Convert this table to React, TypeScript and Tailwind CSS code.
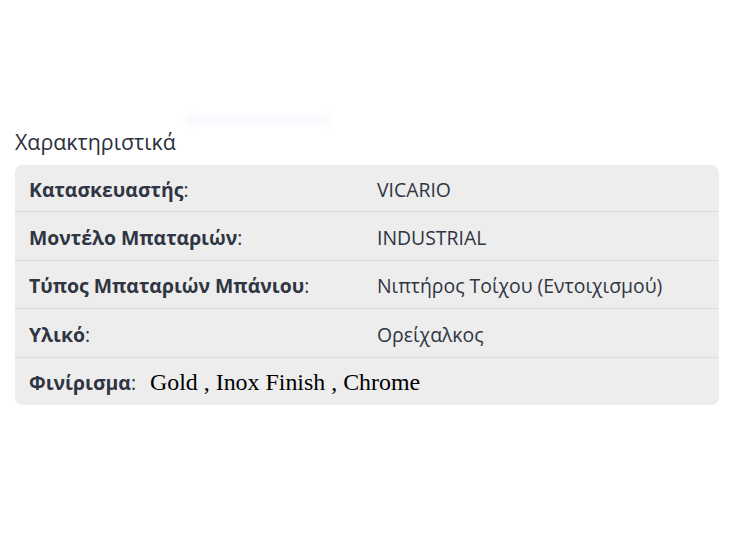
import React from "react";

const rows: [string, string, string][] = [
  ["Κατασκευαστής", "VICARIO", "h-[47px]"],
  ["Μοντέλο Μπαταριών", "INDUSTRIAL", "h-[49px]"],
  ["Τύπος Μπαταριών Μπάνιου", "Νιπτήρος Τοίχου (Εντοιχισμού)", "h-[48px]"],
  ["Υλικό", "Ορείχαλκος", "h-[49px]"],
];

export default function App() {
  return (
    <div
      className="w-[737px] h-[537px] bg-white text-[#2f3542]"
      style={{ fontFamily: '"Open Sans", sans-serif' }}
    >
      <div className="pt-[118px] px-[15px]">
        <div className="relative">
          <div className="absolute left-[170px] top-[-2px] w-[145px] h-[8px] rounded-full bg-[#f4f7fb] blur-[3px]" />
        </div>
        <h2 className="text-[21.4px] leading-[24px] pt-[12px] text-[#2b303b]">Χαρακτηριστικά</h2>
        <div className="mt-[11px] w-[704px] rounded-[8px] bg-[#ededed] overflow-hidden">
          {rows.map(([k, v, h]) => (
            <div key={k} className={`flex ${h} items-center border-b border-[#dcdcdc] px-[14px] pt-[3px] text-[19.4px]`}>
              <div className="w-[348px] font-bold">{k}<span className="font-normal">:</span></div>
              <div>{v}</div>
            </div>
          ))}
          <div className="flex h-[47px] items-center px-[14px] pt-[3px] text-[19.4px]">
            <span className="font-bold">Φινίρισμα</span>
            <span>:</span>
            <span
              className="ml-[14px] text-[23.9px] text-black"
              style={{ fontFamily: '"Liberation Serif", serif' }}
            >
              Gold , Inox Finish , Chrome
            </span>
          </div>
        </div>
      </div>
    </div>
  );
}
